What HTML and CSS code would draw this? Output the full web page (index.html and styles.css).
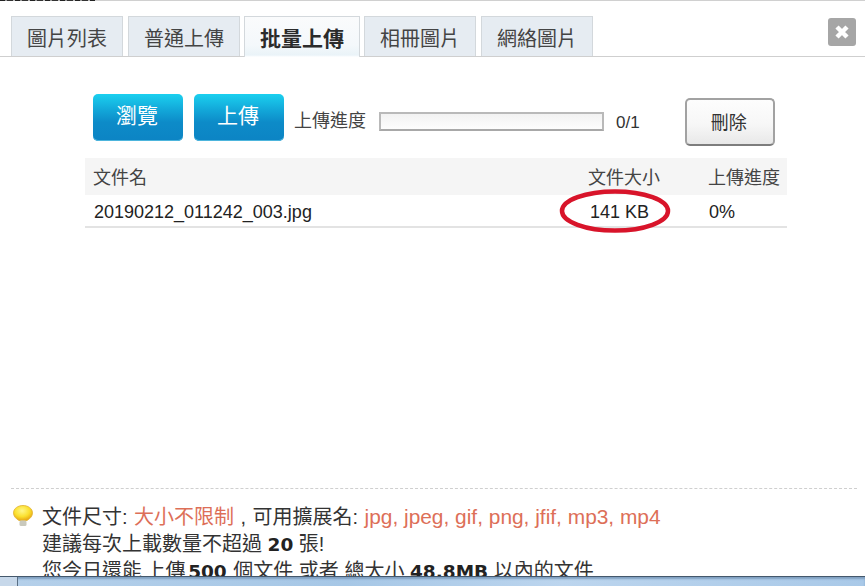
FILE: index.html
```html
<!DOCTYPE html>
<html lang="zh-Hant">
<head>
<meta charset="utf-8">
<title>批量上傳</title>
<link rel="stylesheet" href="styles.css">
</head>
<body>
<div class="topclip"><div class="topclip-text"></div></div>
<main class="dialog">
  <div class="tabbar">
    <div class="tabs">
      <a class="tab">圖片列表</a>
      <a class="tab">普通上傳</a>
      <a class="tab active">批量上傳</a>
      <a class="tab">相冊圖片</a>
      <a class="tab">網絡圖片</a>
    </div>
    <button class="close" aria-label="關閉">
      <svg viewBox="0 0 16 16" width="16" height="16"><path d="M3 3 L13 13 M13 3 L3 13" stroke="#fff" stroke-width="4.500"/></svg>
    </button>
  </div>
  <section class="upload">
    <div class="toolbar">
      <button class="blue">瀏覽</button>
      <button class="blue second">上傳</button>
      <span class="label">上傳進度</span>
      <div class="progress"></div>
      <span class="count">0/1</span>
      <button class="delete">刪除</button>
    </div>
    <div class="table">
      <div class="row head">
        <span class="c-name">文件名</span>
        <span class="c-size">文件大小</span>
        <span class="c-prog">上傳進度</span>
      </div>
      <div class="row body-row">
        <span class="c-name">20190212_011242_003.jpg</span>
        <span class="c-size size-val">141 KB</span>
        <span class="c-prog">0%</span>
        <svg class="mark" viewBox="0 0 114 46" width="114" height="46"><ellipse cx="57" cy="23" rx="53" ry="19.500" fill="none" stroke="#d8142a" stroke-width="4.500"/></svg>
      </div>
    </div>
  </section>
  <section class="notes">
    <svg class="bulb" viewBox="0 0 20 22" width="20" height="22">
      <defs><radialGradient id="glow" cx="45%" cy="35%" r="65%"><stop offset="0" stop-color="#fff78a"/><stop offset=".6" stop-color="#fbe02e"/><stop offset="1" stop-color="#e8a914"/></radialGradient></defs>
      <path d="M6 15.500 C2.500 13.500 .5 11 .5 7.800 C.5 3.500 5 .5 10 .5 C15 .5 19.500 3.500 19.500 7.800 C19.500 11 17.500 13.500 14 15.500 Z" fill="url(#glow)" stroke="#e0b030" stroke-width=".8"/>
      <rect x="6.500" y="15.500" width="7" height="5.500" rx="1.500" fill="#c9c9bd"/>
    </svg>
    <div class="note-text">
      <p class="first">文件尺寸: <em>大小不限制</em> , 可用擴展名: <em class="ext">jpg, jpeg, gif, png, jfif, mp3, mp4</em></p>
      <p>建議每次上載數量不超過 <b>20</b> 張!</p>
      <p>您今日還能 <span class="pull">上傳</span> <b class="tight">500</b> 個文件 或者 總大小 <b>48.8MB</b> 以內的文件</p>
    </div>
  </section>
</main>
<footer class="taskbar"><div class="task-start"></div></footer>
</body>
</html>
```
FILE: styles.css
```css
* { box-sizing: border-box; }
html, body { margin: 0; height: 100%; }
body {
  width: 865px;
  height: 586px;
  overflow: hidden;
  display: flex;
  flex-direction: column;
  background: #fff;
  color: #333;
  font-family: "Liberation Sans", "Noto Sans CJK TC", sans-serif;
}
.topclip {
  height: 1px;
  flex: none;
  background: #d0d0d0;
  overflow: hidden;
}
.topclip-text {
  width: 95px;
  height: 1px;
  background: repeating-linear-gradient(90deg, #222 0 5px, #999 5px 7px, #333 7px 13px, #bbb 13px 15px);
}
.dialog {
  flex: 1;
  min-height: 0;
  overflow: hidden;
  display: flex;
  flex-direction: column;
}
.tabbar {
  display: flex;
  justify-content: space-between;
  align-items: flex-start;
  height: 56px;
  flex: none;
  border-bottom: 1px solid #cfcfcf;
  padding: 15px 9px 0 11px;
}
.tabs { display: flex; height: 41px; }
.tab {
  width: 112px;
  height: 40px;
  margin-right: 5px;
  background: #e6ecf2;
  border: 1px solid #d3d8dc;
  border-bottom: 0;
  font-size: 20px;
  line-height: 45px;
  text-align: center;
  color: #444;
}
.tab.active {
  width: 116px;
  height: 41px;
  margin-left: -1px;
  margin-right: 4px;
  background: linear-gradient(#fafbfc, #f4f8fb 70%, #eaf3f8 95%, #fff);
  font-weight: bold;
  font-size: 21px;
  line-height: 43px;
  color: #2b2b2b;
}
.close {
  width: 28px;
  height: 28px;
  margin-top: 2px;
  padding: 0;
  border: 0;
  border-radius: 3px;
  background: #a6a6a6;
  display: flex;
  align-items: center;
  justify-content: center;
}
.upload { height: 431px; flex: none; padding: 37px 78px 0 85px; }
.toolbar { display: flex; align-items: flex-start; height: 65px; padding-left: 8px; }
button { font-family: inherit; }
.blue {
  width: 90px;
  height: 47px;
  padding: 0 2px 7px 0;
  border: 0;
  border-radius: 5px;
  background: linear-gradient(#1bd0ef, #12a6d8 35%, #0d8bc8 60%, #0c84c4);
  box-shadow: inset 0 -1px 0 #4db5dd;
  color: #fff;
  font-size: 21px;
}
.second { margin-left: 11px; }
.label { margin: 17px 0 0 10px; font-size: 18px; color: #444; line-height: 20px; }
.progress {
  width: 225px;
  height: 19px;
  margin: 18px 0 0 13px;
  border: 2px solid #b9b9b9;
  border-bottom-color: #a8a8a8;
  background: linear-gradient(#f2f2f2, #fdfdfd);
}
.count { margin: 19px 0 0 12px; font-size: 17px; line-height: 20px; color: #333; }
.delete {
  width: 90px;
  height: 48px;
  margin: 4px 0 0 45px;
  padding: 0 2px 3px 0;
  border: 2px solid #a2a2a2;
  border-bottom-color: #7d7d7d;
  border-radius: 5px;
  background: linear-gradient(#fdfdfd, #f7f7f7 55%, #e8e8e8);
  font-size: 18px;
  color: #333;
}
.table { margin-top: -1px; }
.row { display: flex; position: relative; padding-left: 9px; font-size: 18px; }
.head { height: 37px; padding-left: 8px; background: #f5f5f5; line-height: 41px; color: #444; }
.body-row { height: 33px; line-height: 35px; border-bottom: 2px solid #e3e3e3; color: #222; }
.c-name { width: 495px; }
.c-size { width: 120px; }
.size-val { padding-left: 1px; }
.mark { position: absolute; left: 473px; top: -7px; }
.notes {
  flex: none;
  margin: 0 8px 0 11px;
  border-top: 1px dashed #cfcfcf;
  padding: 15px 0 0 2px;
  display: flex;
}
.bulb { flex: none; margin-top: 1px; }
.note-text { margin-left: 9px; font-size: 20px; line-height: 26.500px; color: #333; }
.note-text p { margin: 0; white-space: nowrap; }
.first { word-spacing: .9px; }
.note-text em { font-style: normal; color: #dd6f58; }
.note-text .ext { font-size: 20.900px; word-spacing: 0; }
.note-text b { font-family: "DejaVu Sans", sans-serif; font-size: 18.500px; color: #222; }
.pull { margin-left: -2px; }
.note-text .tight { margin: 0 1px 0 -3px; }
.taskbar {
  height: 10px;
  flex: none;
  border-top: 1px solid #44586c;
  background: linear-gradient(90deg, #b5d0ea, #a6c7e6 40%, #bcd5ee 65%, #a9c9e8);
  box-shadow: inset 0 2px 2px #7f9fc0;
}
.task-start { width: 18px; height: 100%; border-right: 1px solid #5a6f85; background: #c7d8ea; }
```
